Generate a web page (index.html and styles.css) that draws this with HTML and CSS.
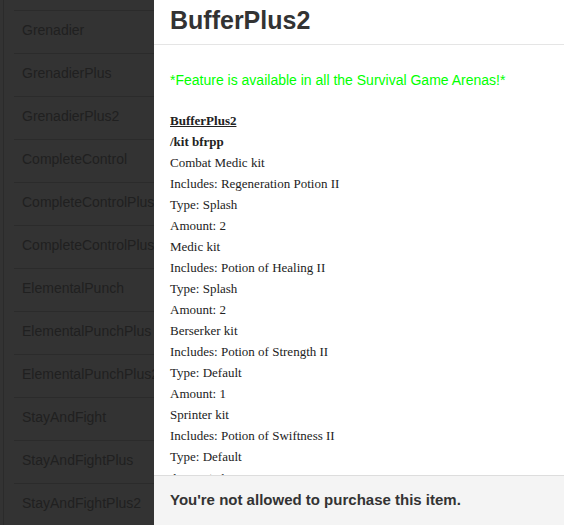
FILE: index.html
```html
<!DOCTYPE html>
<html lang="en">
<head>
  <meta charset="UTF-8" />
  <title>BufferPlus2</title>
  <link rel="stylesheet" href="styles.css">
</head>
<body>
  <div class="kit-list">
    <div class="kit-item"></div>
    <div class="kit-item">Grenadier</div>
    <div class="kit-item">GrenadierPlus</div>
    <div class="kit-item">GrenadierPlus2</div>
    <div class="kit-item">CompleteControl</div>
    <div class="kit-item">CompleteControlPlus</div>
    <div class="kit-item">CompleteControlPlus2</div>
    <div class="kit-item">ElementalPunch</div>
    <div class="kit-item">ElementalPunchPlus</div>
    <div class="kit-item">ElementalPunchPlus2</div>
    <div class="kit-item">StayAndFight</div>
    <div class="kit-item">StayAndFightPlus</div>
    <div class="kit-item">StayAndFightPlus2</div>
  </div>

  <div class="modal">
    <div class="modal-header">
      <h3>BufferPlus2</h3>
    </div>
    <div class="modal-body">
      <p class="notice">*Feature is available in all the Survival Game Arenas!*</p>
      <div class="kit-info">
        <div><b><u>BufferPlus2</u></b></div>
        <div><b>/kit bfrpp</b></div>
        <div>Combat Medic kit</div>
        <div>Includes: Regeneration Potion II</div>
        <div>Type: Splash</div>
        <div>Amount: 2</div>
        <div>Medic kit</div>
        <div>Includes: Potion of Healing II</div>
        <div>Type: Splash</div>
        <div>Amount: 2</div>
        <div>Berserker kit</div>
        <div>Includes: Potion of Strength II</div>
        <div>Type: Default</div>
        <div>Amount: 1</div>
        <div>Sprinter kit</div>
        <div>Includes: Potion of Swiftness II</div>
        <div>Type: Default</div>
        <div>Amount: 1</div>
      </div>
    </div>
    <div class="modal-footer">You're not allowed to purchase this item.</div>
  </div>
</body>
</html>
```

FILE: styles.css
```css
* {
  box-sizing: border-box;
}

html, body {
  height: 100%;
}

body {
  margin: 0;
  background: #333;
  font-family: 'Liberation Sans', Arial, sans-serif;
  overflow: hidden;
}

.kit-list {
  margin-left: 3px;
  border-left: 1px solid #2b2b2b;
  padding-left: 10px;
  margin-top: -32px;
}

.kit-item {
  height: 43px;
  line-height: 38px;
  padding-left: 8px;
  border-bottom: 1px solid #2b2b2b;
  color: #202020;
  font-size: 14px;
  white-space: nowrap;
}

.modal {
  position: fixed;
  top: 0;
  left: 154px;
  right: 0;
  bottom: 0;
  background: #fff;
  display: flex;
  flex-direction: column;
}

.modal-header {
  height: 45px;
  padding: 0 16px;
  border-bottom: 1px solid #e5e5e5;
}

.modal-header h3 {
  margin: 0;
  font-size: 25px;
  line-height: 41px;
  color: #333;
}

.modal-body {
  flex: 1;
  overflow: hidden;
  padding: 25px 16px 0;
}

.notice {
  margin: 0 0 20px;
  color: #00ff00;
  font-size: 14px;
  line-height: 20px;
}

.kit-info {
  font-family: 'Liberation Serif', 'Times New Roman', serif;
  font-size: 13px;
  line-height: 21px;
  color: #222;
}

.modal-footer {
  height: 50px;
  border-top: 1px solid #ddd;
  background: #f4f4f4;
  padding: 0 16px;
  font-size: 15px;
  font-weight: bold;
  line-height: 48px;
  color: #333;
}
```
